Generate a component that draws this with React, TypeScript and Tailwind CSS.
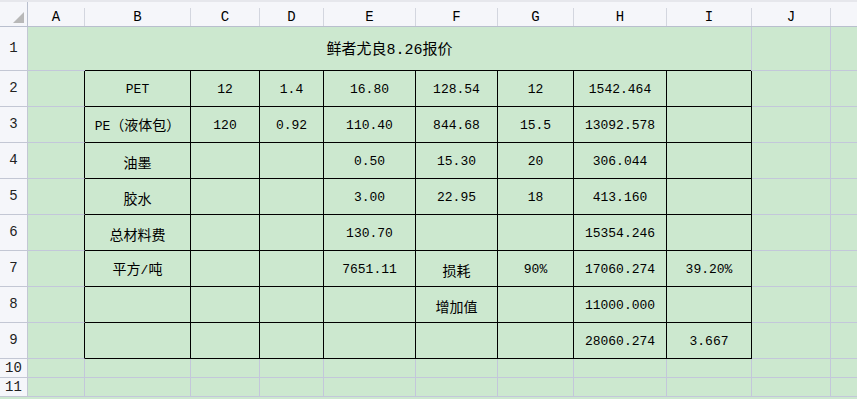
import React from 'react'

const cols = ['A', 'B', 'C', 'D', 'E', 'F', 'G', 'H', 'I', 'J', '']
const gridCols = 'grid-cols-[28px_57px_106px_69px_64px_92px_82px_76px_93px_85px_79px_1fr]'

const rows: string[][] = [
  ['PET', '12', '1.4', '16.80', '128.54', '12', '1542.464', ''],
  ['PE（液体包）', '120', '0.92', '110.40', '844.68', '15.5', '13092.578', ''],
  ['油墨', '', '', '0.50', '15.30', '20', '306.044', ''],
  ['胶水', '', '', '3.00', '22.95', '18', '413.160', ''],
  ['总材料费', '', '', '130.70', '', '', '15354.246', ''],
  ['平方/吨', '', '', '7651.11', '损耗', '90%', '17060.274', '39.20%'],
  ['', '', '', '', '增加值', '', '11000.000', ''],
  ['', '', '', '', '', '', '28060.274', '3.667'],
]

// latin runs get a smaller mono size so they sit at half the CJK width, like the sheet font
function Mixed({ text, big }: { text: string; big?: boolean }) {
  const parts = text.match(/[\x00-\x7F]+|[^\x00-\x7F]+/g) ?? []
  return (
    <span className="flex items-baseline whitespace-pre leading-[18px]">
      {parts.map((p, i) =>
        /^[\x00-\x7F]+$/.test(p) ? (
          <span
            key={i}
            className={`font-['Liberation_Mono',monospace] ${big ? 'text-[15px]' : 'text-[13px]'}`}
          >
            {p}
          </span>
        ) : (
          <span
            key={i}
            className={`font-['Noto_Sans_CJK_SC',sans-serif] ${big ? 'text-[15px]' : 'text-[14px]'}`}
          >
            {p}
          </span>
        )
      )}
    </span>
  )
}

function RowHead({ n, h }: { n: number; h: string }) {
  return (
    <div
      className={`${h} flex items-center justify-center bg-[#f5f6fa] border-r border-b border-[#c3c7d4] font-['Liberation_Mono',monospace] text-[14px] text-[#222]`}
    >
      {n}
    </div>
  )
}

export default function App() {
  return (
    <div className="w-[857px] h-[399px] overflow-hidden bg-[#cce8cf] text-black">
      {/* column headers */}
      <div className={`grid ${gridCols} h-[27px] bg-[#f5f6fa] border-t-2 border-[#e6e7ec]`}>
        <div className="flex items-end justify-end border-r border-b border-[#b9bfce] pr-[3px] pb-[3px]">
          <svg width="11" height="11" viewBox="0 0 11 11">
            <polygon points="11,0 11,11 0,11" fill="#b8b8b8" />
          </svg>
        </div>
        {cols.map((c, i) => (
          <div key={i} className="flex flex-col justify-end border-b border-[#b9bfce]">
            <div
              className={`h-[18px] flex items-center justify-center font-['Liberation_Mono',monospace] text-[14px] ${
                i < cols.length - 1 ? 'border-r border-[#d3d6df]' : ''
              }`}
            >
              {c}
            </div>
          </div>
        ))}
      </div>

      {/* row 1 with merged title */}
      <div className={`grid ${gridCols} h-[44px]`}>
        <RowHead n={1} h="h-[44px]" />
        <div className="col-span-9 flex flex-col border-r border-[#c3c7da]">
          <div className="flex-1 flex items-center justify-center pt-[2px]">
            <Mixed text="鲜者尤良8.26报价" big />
          </div>
          <div className="flex h-px">
            <div className="w-[57px] bg-[#c3c7da]" />
            <div className="flex-1 bg-black" />
          </div>
        </div>
        <div className="border-r border-b border-[#c3c7da]" />
        <div className="border-b border-[#c3c7da]" />
      </div>

      {/* rows 2-9 with the black bordered table */}
      {rows.map((r, ri) => (
        <div key={ri} className={`grid ${gridCols} h-[36px]`}>
          <RowHead n={ri + 2} h="h-[36px]" />
          <div className="border-r border-r-black border-b border-b-[#c3c7da]" />
          {r.map((v, ci) => (
            <div key={ci} className="flex items-center justify-center border-r border-b border-black pt-[2px]">
              {v && <Mixed text={v} />}
            </div>
          ))}
          <div className="border-r border-b border-[#c3c7da]" />
          <div className="border-b border-[#c3c7da]" />
        </div>
      ))}

      {/* rows 10-11 */}
      {[10, 11].map((n) => (
        <div key={n} className={`grid ${gridCols} h-[19px]`}>
          <RowHead n={n} h="h-[19px]" />
          {cols.map((_, i) => (
            <div
              key={i}
              className={`border-b border-[#c3c7da] ${i < cols.length - 1 ? 'border-r' : ''}`}
            />
          ))}
        </div>
      ))}
    </div>
  )
}
